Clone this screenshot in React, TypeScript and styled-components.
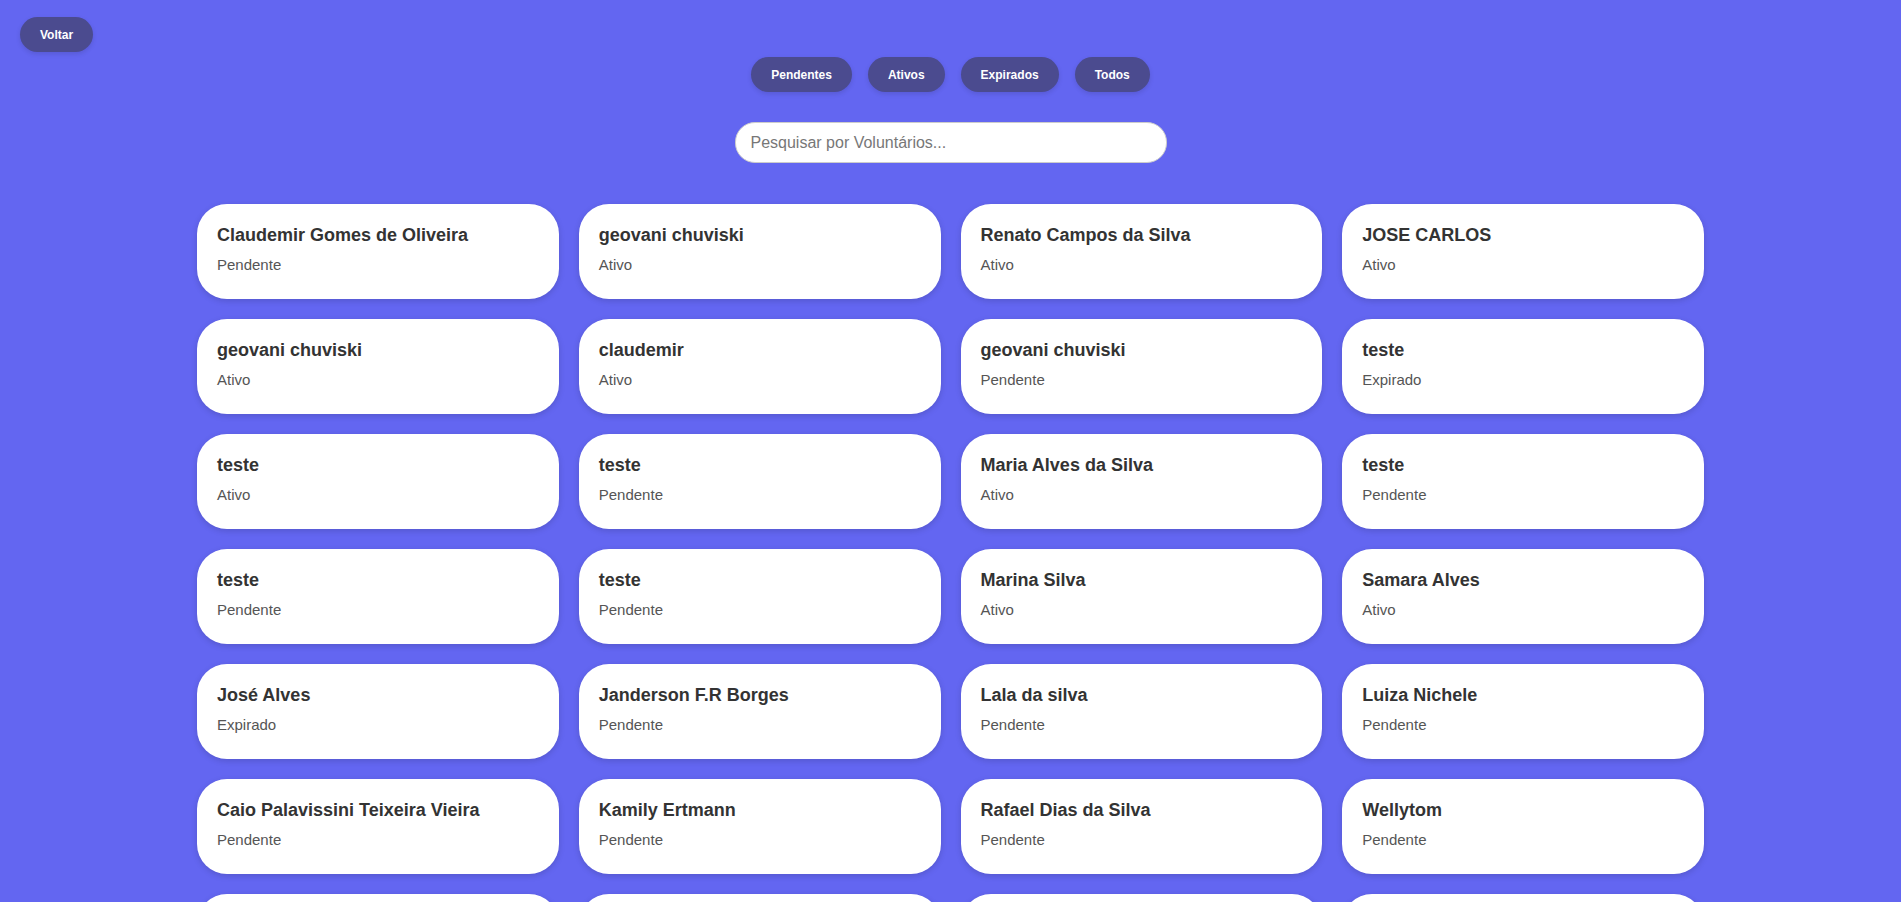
import React, { useState } from "react";
import styled, { createGlobalStyle } from "styled-components";

interface Voluntario {
  nome: string;
  status: "Pendente" | "Ativo" | "Expirado";
}

const voluntarios: Voluntario[] = [
  { nome: "Claudemir Gomes de Oliveira", status: "Pendente" },
  { nome: "geovani chuviski", status: "Ativo" },
  { nome: "Renato Campos da Silva", status: "Ativo" },
  { nome: "JOSE CARLOS", status: "Ativo" },
  { nome: "geovani chuviski", status: "Ativo" },
  { nome: "claudemir", status: "Ativo" },
  { nome: "geovani chuviski", status: "Pendente" },
  { nome: "teste", status: "Expirado" },
  { nome: "teste", status: "Ativo" },
  { nome: "teste", status: "Pendente" },
  { nome: "Maria Alves da Silva", status: "Ativo" },
  { nome: "teste", status: "Pendente" },
  { nome: "teste", status: "Pendente" },
  { nome: "teste", status: "Pendente" },
  { nome: "Marina Silva", status: "Ativo" },
  { nome: "Samara Alves", status: "Ativo" },
  { nome: "José Alves", status: "Expirado" },
  { nome: "Janderson F.R Borges", status: "Pendente" },
  { nome: "Lala da silva", status: "Pendente" },
  { nome: "Luiza Nichele", status: "Pendente" },
  { nome: "Caio Palavissini Teixeira Vieira", status: "Pendente" },
  { nome: "Kamily Ertmann", status: "Pendente" },
  { nome: "Rafael Dias da Silva", status: "Pendente" },
  { nome: "Wellytom", status: "Pendente" },
  { nome: "teste", status: "Pendente" },
  { nome: "teste", status: "Pendente" },
  { nome: "teste", status: "Pendente" },
  { nome: "teste", status: "Pendente" },
];

const filtros = ["Pendentes", "Ativos", "Expirados", "Todos"];

function App() {
  const [busca, setBusca] = useState("");

  const lista = voluntarios.filter((v) =>
    v.nome.toLowerCase().includes(busca.toLowerCase())
  );

  return (
    <>
      <GlobalStyle />
      <Page>
        <TopBar>
          <PillButton>Voltar</PillButton>
        </TopBar>
        <Filters>
          {filtros.map((f) => (
            <PillButton key={f}>{f}</PillButton>
          ))}
        </Filters>
        <SearchInput
          type="text"
          placeholder="Pesquisar por Voluntários..."
          value={busca}
          onChange={(e) => setBusca(e.target.value)}
        />
        <Grid>
          {lista.map((v, i) => (
            <Card key={i}>
              <Nome>{v.nome}</Nome>
              <Status>{v.status}</Status>
            </Card>
          ))}
        </Grid>
      </Page>
    </>
  );
}

export default App;

const GlobalStyle = createGlobalStyle`
  * {
    box-sizing: border-box;
  }
  body {
    margin: 0;
    background: #6366f1;
    font-family: "Liberation Sans", Arial, sans-serif;
  }
`;

const Page = styled.div`
  min-height: 100vh;
  padding: 17px 20px 40px;
  display: flex;
  flex-direction: column;
  align-items: center;
`;

const TopBar = styled.div`
  align-self: stretch;
  display: flex;
`;

const PillButton = styled.button`
  height: 35px;
  padding: 0 20px;
  border: none;
  border-radius: 20px;
  background: #4b4b8f;
  color: #fff;
  font-family: "Liberation Sans", Arial, sans-serif;
  font-size: 12px;
  font-weight: bold;
  cursor: pointer;
  box-shadow: 0 2px 5px rgba(0, 0, 0, 0.12);
`;

const Filters = styled.div`
  display: flex;
  gap: 16px;
  margin-top: 5px;
`;

const SearchInput = styled.input`
  width: 432px;
  height: 41px;
  margin-top: 30px;
  padding: 0 15px;
  border: 1px solid #ccc;
  border-radius: 20px;
  font-family: "Liberation Sans", Arial, sans-serif;
  font-size: 16px;
  outline: none;

  &::placeholder {
    color: #777;
  }
`;

const Grid = styled.div`
  width: 1507px;
  margin-top: 41px;
  display: grid;
  grid-template-columns: repeat(4, 1fr);
  column-gap: 20px;
  row-gap: 20px;
`;

const Card = styled.div`
  height: 95px;
  padding: 21px 20px 20px;
  background: #fff;
  border-radius: 30px;
  box-shadow: 0 2px 6px rgba(0, 0, 0, 0.15);
`;

const Nome = styled.h3`
  margin: 0 0 10px;
  font-size: 18px;
  font-weight: bold;
  line-height: 21px;
  color: #333;
`;

const Status = styled.p`
  margin: 0;
  font-size: 15px;
  line-height: 17px;
  color: #555;
`;
